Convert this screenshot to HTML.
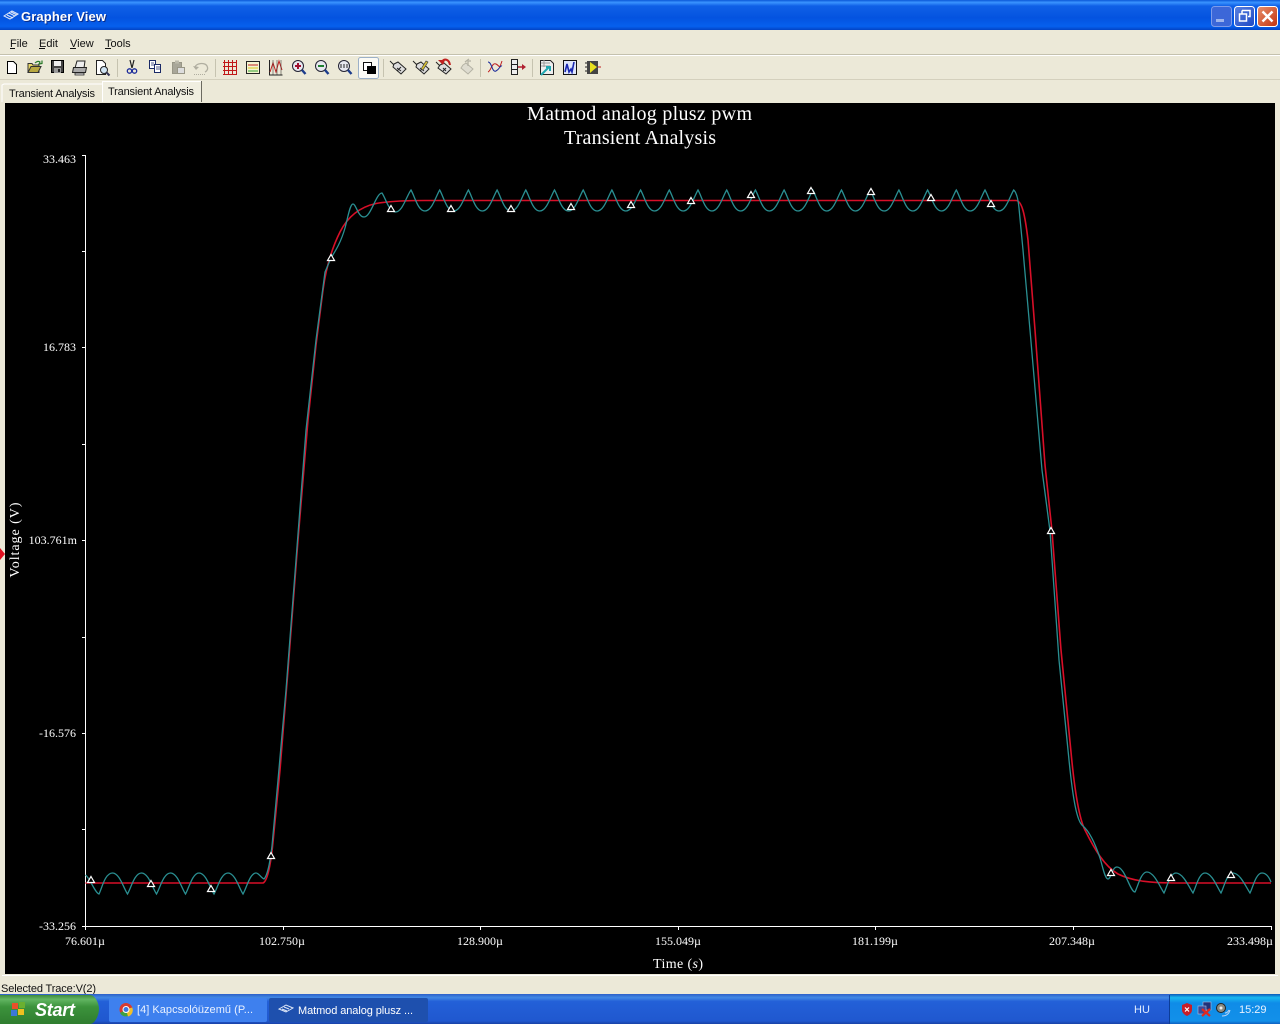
<!DOCTYPE html>
<html>
<head>
<meta charset="utf-8">
<title>Grapher View</title>
<style>
html,body{margin:0;padding:0;width:1280px;height:1024px;overflow:hidden;background:#ece9d8}
svg{position:absolute;left:0;top:0;display:block}
.ui{font-family:"Liberation Sans",sans-serif;font-size:11px;fill:#111}
.s{font-family:"Liberation Serif",serif;fill:#fff}
</style>
</head>
<body>
<svg width="1280" height="1024" viewBox="0 0 1280 1024" xmlns="http://www.w3.org/2000/svg">
<defs>
<linearGradient id="tb" x1="0" y1="0" x2="0" y2="1">
<stop offset="0" stop-color="#0a58d8"/><stop offset=".08" stop-color="#3a93ff"/><stop offset=".2" stop-color="#0f60e6"/><stop offset=".6" stop-color="#0453e0"/><stop offset=".88" stop-color="#0660ee"/><stop offset="1" stop-color="#0343c4"/>
</linearGradient>
<linearGradient id="task" x1="0" y1="0" x2="0" y2="1">
<stop offset="0" stop-color="#2c60c8"/><stop offset=".12" stop-color="#4288e4"/><stop offset=".25" stop-color="#2360d8"/><stop offset=".9" stop-color="#2058cf"/><stop offset="1" stop-color="#1941a5"/>
</linearGradient>
<linearGradient id="tray" x1="0" y1="0" x2="0" y2="1">
<stop offset="0" stop-color="#0c59b9"/><stop offset=".12" stop-color="#19b8f0"/><stop offset=".3" stop-color="#0f8ce8"/><stop offset=".9" stop-color="#1290e9"/><stop offset="1" stop-color="#1060c0"/>
</linearGradient>
<linearGradient id="st" x1="0" y1="0" x2="0" y2="1">
<stop offset="0" stop-color="#3e8a3e"/><stop offset=".15" stop-color="#62b562"/><stop offset=".4" stop-color="#3c933c"/><stop offset="1" stop-color="#2f7d2f"/>
</linearGradient>
<linearGradient id="wb" x1="0" y1="0" x2="1" y2="1"><stop offset="0" stop-color="#5b82e0"/><stop offset="1" stop-color="#1c47c4"/></linearGradient>
<linearGradient id="cb" x1="0" y1="0" x2="1" y2="1"><stop offset="0" stop-color="#e8906c"/><stop offset="1" stop-color="#c2320f"/></linearGradient>
</defs>

<!-- title bar -->
<rect width="1280" height="30" fill="url(#tb)"/>
<g fill="none" stroke="#dfe8f8" stroke-width="1"><path d="M4 16l8-5 6 3-8 5zM7 15l6 3M9 13l6 3M11 12l6 3"/></g>
<text x="22" y="22" font-family="Liberation Sans" font-weight="bold" font-size="13" fill="#0a2c88" textLength="85">Grapher View</text>
<text x="21" y="21" font-family="Liberation Sans" font-weight="bold" font-size="13" fill="#fff" textLength="85">Grapher View</text>
<rect x="1211.500" y="6.500" width="20" height="20" rx="3" fill="#3c67d8" stroke="#7d9bea"/>
<rect x="1216" y="19" width="8" height="3" fill="#9db4ec"/>
<rect x="1234.500" y="6.500" width="20" height="20" rx="3" fill="url(#wb)" stroke="#fff"/>
<path d="M1242 10.500h8v6h-2M1242 10.500v3" fill="none" stroke="#fff" stroke-width="1.500"/>
<rect x="1239.500" y="14" width="7" height="7" fill="none" stroke="#fff" stroke-width="1.500"/>
<rect x="1257.500" y="6.500" width="20" height="20" rx="3" fill="url(#cb)" stroke="#fff"/>
<path d="M1262.500 11.500l10 10M1272.500 11.500l-10 10" stroke="#fff" stroke-width="2.400"/>

<!-- menu -->
<text class="ui" x="10" y="47">File</text><rect x="10" y="48" width="5" height="1" fill="#111"/>
<text class="ui" x="39" y="47">Edit</text><rect x="39" y="48" width="6" height="1" fill="#111"/>
<text class="ui" x="70" y="47">View</text><rect x="70" y="48" width="6" height="1" fill="#111"/>
<text class="ui" x="105" y="47">Tools</text><rect x="105" y="48" width="6" height="1" fill="#111"/>
<rect y="54" width="1280" height="1" fill="#c4c1ae"/><rect y="55" width="1280" height="1" fill="#fff"/>

<!-- toolbar -->
<rect y="79" width="1280" height="1" fill="#d4d0bd"/>
<g fill="#c6c3b0"><rect x="117" y="59" width="1" height="18"/><rect x="215" y="59" width="1" height="18"/><rect x="383" y="59" width="1" height="18"/><rect x="480" y="59" width="1" height="18"/><rect x="532" y="59" width="1" height="18"/></g>
<rect x="358.500" y="57.500" width="20" height="21" rx="2" fill="#fbfaf5" stroke="#9cb0c8"/>

<!-- file icons -->
<path d="M7.500 61.500h6l3 3v9h-9z" fill="#fff" stroke="#000"/>
<path d="M28 72.500v-9h4l1 1.500h6v7.500z" fill="#e8d868" stroke="#333"/><path d="M28 72.500l3-6h10l-3 6z" fill="#b8a840" stroke="#333"/><path d="M35 63c2-2 4-2 5-1l-1 2 3-.5v-3" fill="none" stroke="#2a7a2a" stroke-width="1.200"/>
<rect x="51.500" y="60.500" width="12" height="12" fill="#444" stroke="#000"/><rect x="54" y="61" width="7" height="5" fill="#eee"/><rect x="54" y="68" width="7" height="5" fill="#999"/><rect x="58" y="69" width="2" height="3" fill="#222"/>
<path d="M75 68l2-7h8l-1 7" fill="#eee" stroke="#222"/><path d="M73.500 67.500h13l-1 5h-13z" fill="#aaa" stroke="#222"/><path d="M75 73h9v2h-9z" fill="#ddd" stroke="#222" stroke-width=".8"/>
<path d="M96.500 60.500h6l3 3v11h-9z" fill="#fff" stroke="#222"/><circle cx="104" cy="70" r="3.500" fill="#cfe4f4" stroke="#222"/><path d="M106.500 72.500l3 3" stroke="#335" stroke-width="2"/>
<!-- cut / copy / paste / undo -->
<path d="M130 60l2 8M134 60l-2 8" stroke="#222" stroke-width="1.200"/><circle cx="129.500" cy="71" r="2.200" fill="none" stroke="#1a2a9a" stroke-width="1.300"/><circle cx="134.500" cy="71" r="2.200" fill="none" stroke="#1a2a9a" stroke-width="1.300"/>
<path d="M149.500 60.500h6v8h-6z" fill="#fff" stroke="#1a2a66"/><path d="M154.500 64.500h6v8h-6z" fill="#fff" stroke="#1a2a66"/><path d="M156 67h4M156 69h4M151 63h3M151 65h3" stroke="#1a2a66" stroke-width=".8"/>
<path d="M172.500 62.500h9v11h-9z" fill="#a8a698" stroke="#989686"/><rect x="175" y="60.500" width="4" height="3" fill="#bbb9aa"/><path d="M177.500 67.500h7v6h-7z" fill="#ddd" stroke="#989686"/>
<path d="M195 68c0-5 10-6 12-2 1.500 3 0 5-2 6" fill="none" stroke="#b0aea0" stroke-width="1.300"/><path d="M193 66l3 4 3-3z" fill="#b0aea0"/><path d="M194 74.500h12" stroke="#b0aea0" stroke-dasharray="1 1"/>
<!-- grid -->
<g stroke="#c01818" fill="none"><path d="M224.500 60v15M228.500 60v15M232.500 60v15M236.500 60v15M223 62.500h14M223 66.500h14M223 70.500h14M223 74.500h14"/></g>
<rect x="246.500" y="61.500" width="13" height="12" fill="#f6f4d0" stroke="#222"/><path d="M248 65h10" stroke="#c02020"/><path d="M248 68h10" stroke="#d8c820"/><path d="M248 71h10" stroke="#30a030"/>
<path d="M269.500 60v15h13" fill="none" stroke="#222"/><path d="M270 72l3-9 3 9 3-11 3 9" fill="none" stroke="#c02020"/><path d="M273 60v15M277 60v15M281 60v15" stroke="#222" stroke-width=".5"/>
<!-- zooms -->
<circle cx="298" cy="66" r="5.500" fill="#e8e8f0" stroke="#223"/><path d="M302 70l3.500 4" stroke="#1c3c8c" stroke-width="2.400"/><path d="M295 66h6M298 63v6" stroke="#a01030" stroke-width="2"/>
<circle cx="321" cy="66" r="5.500" fill="#e8e8f0" stroke="#223"/><path d="M325 70l3.500 4" stroke="#1c3c8c" stroke-width="2.400"/><path d="M318 66h6" stroke="#208030" stroke-width="2"/>
<circle cx="344" cy="66" r="5.500" fill="#e8e8f0" stroke="#223"/><path d="M348 70l3.500 4" stroke="#1c3c8c" stroke-width="2.400"/><path d="M341 64v4M344 64v4M347 64v4" stroke="#222"/>
<!-- pressed btn -->
<rect x="363.500" y="62.500" width="8" height="8" fill="#fff" stroke="#111"/><rect x="367" y="66" width="9" height="8" fill="#000"/>
<!-- tags -->
<path d="M390 61l4 4" stroke="#222"/><path d="M394 64l4-2 8 7-5 5-8-7z" fill="#ddd" stroke="#222"/><path d="M397 68l4 3M401 67l-4 4" stroke="#222"/>
<path d="M413 61l4 4" stroke="#222"/><path d="M417 64l4-2 8 7-5 5-8-7z" fill="#ddd" stroke="#222"/><path d="M420 68l4 3M424 67l-4 4" stroke="#222"/><path d="M421 69l5-8 2 1-5 8z" fill="#d8c030" stroke="#444" stroke-width=".7"/>
<path d="M436 62l4 4" stroke="#222"/><path d="M440 65l4-2 7 6-5 5-8-6z" fill="#ddd" stroke="#222"/><path d="M443 68l3 3M446 68l-3 3" stroke="#222"/><path d="M442 62c2-4 7-3 8 3" fill="none" stroke="#c02020" stroke-width="2"/><path d="M438 60l5 5 2-5z" fill="#c02020"/>
<path d="M463 65l3-2 7 6-5 5-7-6z" fill="#dedcd0" stroke="#b4b2a4"/><path d="M468 66v-5h3M465 62l4-3" fill="none" stroke="#b4b2a4" stroke-width="1.300"/>
<!-- traces etc -->
<path d="M488 72c3-1 4-10 8-8s3 6 6-3" fill="none" stroke="#c02020"/><path d="M488 62c4 0 4 11 8 9s4-6 6-5" fill="none" stroke="#1a2a9a"/>
<g fill="#eee" stroke="#222"><rect x="511.500" y="59.500" width="6" height="5"/><rect x="511.500" y="64.500" width="6" height="5"/><rect x="511.500" y="69.500" width="6" height="5"/></g><path d="M518 67h5" stroke="#b02030" stroke-width="1.500"/><path d="M522 64l4 3-4 3z" fill="#b02030"/>
<path d="M540.500 60.500h10l3 3v11h-13z" fill="#eee" stroke="#222"/><path d="M541 63h9M541 66h9M544 60v7" stroke="#999"/><path d="M541 75l8-8M546 67h4v4" fill="none" stroke="#20a8b0" stroke-width="2"/>
<rect x="563.500" y="60.500" width="13" height="14" fill="#dfe6fa" stroke="#111"/><path d="M565 72l2-8 2 8 2-3 1 3 2-10" fill="none" stroke="#1a28b0" stroke-width="1.600"/>
<rect x="587" y="61" width="11" height="13" fill="#444"/><path d="M590 62l7 5-7 6z" fill="#e8e020"/><path d="M598 67h3" stroke="#c02020"/><path d="M585 63h2M585 67h2M585 71h2" stroke="#222"/>

<!-- tabs -->
<rect y="80" width="1280" height="22" fill="#ece9d8"/>
<path d="M2 102V85l2-1h98" fill="none" stroke="#fff"/>
<path d="M102 102V81h99v21" fill="#f0eee0"/>
<path d="M102.500 102V81.500h99" fill="none" stroke="#fff"/><path d="M201.500 81v21" stroke="#6b6a60"/>
<text class="ui" x="9" y="97" textLength="86">Transient Analysis</text>
<text class="ui" x="108" y="95" textLength="86">Transient Analysis</text>

<!-- plot -->
<rect x="5" y="103" width="1270" height="871" fill="#000"/>
<path d="M0 548l5 6-5 6z" fill="#e01020"/>
<rect x="2" y="975" width="1276" height="1" fill="#fff"/>
<text class="s" x="527" y="120" font-size="20" textLength="225">Matmod analog plusz pwm</text>
<text class="s" x="564" y="144" font-size="20" textLength="152">Transient Analysis</text>

<g stroke="#fff" stroke-width="1" fill="none">
<path d="M85.500 155V926.500H1272"/>
<path d="M82 155.500h4M82 251.500h4M82 347.500h4M82 444.500h4M82 540.500h4M82 637.500h4M82 733.500h4M82 829.500h4M82 926.500h4"/>
<path d="M85.500 926v4M283.500 926v4M480.500 926v4M678.500 926v4M875.500 926v4M1073.500 926v4M1271.500 926v4"/>
</g>

<g class="s" font-size="12" text-anchor="end">
<text x="76" y="163">33.463</text>
<text x="76" y="351">16.783</text>
<text x="77" y="544">103.761m</text>
<text x="76" y="737">-16.576</text>
<text x="76" y="930">-33.256</text>
</g>
<g class="s" font-size="12" text-anchor="middle">
<text x="85" y="945">76.601µ</text>
<text x="282" y="945">102.750µ</text>
<text x="480" y="945">128.900µ</text>
<text x="678" y="945">155.049µ</text>
<text x="875" y="945">181.199µ</text>
<text x="1072" y="945">207.348µ</text>
<text x="1250" y="945">233.498µ</text>
</g>
<text class="s" x="678" y="968" font-size="14" text-anchor="middle" textLength="50">Time (<tspan font-style="italic">s</tspan>)</text>
<text class="s" font-size="14" text-anchor="middle" transform="translate(19 540) rotate(-90)" textLength="75">Voltage (V)</text>

<!-- red trace (under teal on slopes) -->
<path fill="none" stroke="#d80f28" stroke-width="1.600" d="M85.500 883H263
C268 881 271 862 273 842 L280 770 L288 670 L298 540 L308 420 L316 345 L323 290
C326 268 332 248 340 232 C348 216 360 207 376 203.500 C390 201 405 200.500 425 200.500 H1016
C1022 200.500 1025 215 1028 240 L1035 330 L1045 465 L1052 531 L1061 650 L1071 752
C1075 795 1080 822 1086 832 C1094 848 1104 866 1118 874 C1132 881 1150 883 1175 883 H1271"/>

<!-- teal trace -->
<path fill="none" stroke="#2a8f92" stroke-width="1.300" d="M85.500 875C90 878 95 893 99 894
C102 888 105 873 112.500 873
c7 0 11 15 15 21 c3.500 -6 7 -21 14 -21
c7 0 11 15 15 21 c3.500 -6 7 -21 14 -21
c7 0 11 15 15 21 c3.500 -6 7 -21 13.500 -21
c7 0 11 15 15 21 c3.500 -6 7 -21 14 -21
c7 0 11 15 15 21 c3.500 -6 7 -21 13 -21
C259 873 261 878 264 879
C268 875 271 856 272 846
L278 780 L286 690 L296 560 L306 430 L316 340 L325 272 L331 258
C336 250 341 242 345 228 C348 217 350 204 353 204 C356 204 358 217 364 217 C371 217 376 193 382 193
c4 6 7 19 13.500 19
c7 0 11 -16 15.500 -22
c4 7 7 21 14 21 c7 0 11 -15 14.700 -21
c4 7 7 21 14 21 c7 0 11 -15 14.700 -21
c4 7 7 21 14 21 c7 0 11 -15 14.700 -21
c4 7 7 21 14 21 c7 0 11 -15 14.700 -21
c4 7 7 21 14 21 c7 0 11 -15 14.700 -21
c4 7 7 21 14 21 c7 0 11 -15 14.700 -21
c4 7 7 21 14 21 c7 0 11 -15 14.700 -21
c4 7 7 21 14 21 c7 0 11 -15 14.700 -21
c4 7 7 21 14 21 c7 0 11 -15 14.700 -21
c4 7 7 21 14 21 c7 0 11 -15 14.700 -21
c4 7 7 21 14 21 c7 0 11 -15 14.700 -21
c4 7 7 21 14 21 c7 0 11 -15 14.700 -21
c4 7 7 21 14 21 c7 0 11 -15 14.700 -21
c4 7 7 21 14 21 c7 0 11 -15 14.700 -21
c4 7 7 21 14 21 c7 0 11 -15 14.700 -21
c4 7 7 21 14 21 c7 0 11 -15 14.700 -21
c4 7 7 21 14 21 c7 0 11 -15 14.700 -21
c4 7 7 21 14 21 c7 0 11 -15 14.700 -21
c4 7 7 21 14 21 c7 0 11 -15 14.700 -21
c4 7 7 21 14 21 c7 0 11 -15 14.700 -21
c4 7 7 21 14 21 c7 0 11 -15 14.700 -21
C1016 192 1018 198 1019 208
L1023 250 L1030 330 L1042 470 L1050 531 L1059 660 L1069 760
C1073 800 1077 822 1083 826 C1090 832 1096 846 1100 858 C1103 868 1105 879 1108 879
C1111 879 1112 867 1117 867 C1125 867 1130 892 1135 892 C1138 886 1141 872 1147 872
C1154 872 1160 887 1164 893 C1167 887 1170 873 1176 873
C1183 873 1189 887 1193 893 C1196 887 1199 873 1205 873
C1212 873 1217 887 1221 893 C1224 887 1227 873 1233 873
C1240 873 1246 887 1250 893 C1253 887 1256 873 1262 873 C1266 873 1269 877 1271 882"/>

<!-- markers -->
<g fill="#000" stroke="#fff" stroke-width="1.200">
<path d="M91 876.500l3.500 6h-7z"/><path d="M151 880.500l3.500 6h-7z"/><path d="M211 885.500l3.500 6h-7z"/><path d="M271 852.500l3.500 6h-7z"/>
<path d="M331 254.500l3.500 6h-7z"/><path d="M391 205.500l3.500 6h-7z"/><path d="M451 205.500l3.500 6h-7z"/><path d="M511 205.500l3.500 6h-7z"/>
<path d="M571 203.500l3.500 6h-7z"/><path d="M631 201.500l3.500 6h-7z"/><path d="M691 197.500l3.500 6h-7z"/><path d="M751 191.500l3.500 6h-7z"/>
<path d="M811 187.500l3.500 6h-7z"/><path d="M871 188.500l3.500 6h-7z"/><path d="M931 194.500l3.500 6h-7z"/><path d="M991 200.500l3.500 6h-7z"/>
<path d="M1051 527.500l3.500 6h-7z"/><path d="M1111 869.500l3.500 6h-7z"/><path d="M1171 874.500l3.500 6h-7z"/><path d="M1231 871.500l3.500 6h-7z"/>
</g>

<!-- status bar -->
<rect y="976" width="1280" height="18" fill="#ece9d8"/>
<text class="ui" x="1" y="992" textLength="95">Selected Trace:V(2)</text>

<!-- taskbar -->
<rect y="994" width="1280" height="30" fill="url(#task)"/>
<path d="M0 995h90c5 0 9 8 9 14s-4 15-9 15H0z" fill="url(#st)"/>
<g><rect x="12" y="1003" width="6" height="6" fill="#e8502a"/><rect x="19" y="1002" width="6" height="6" fill="#6ab030"/><rect x="11" y="1010" width="6" height="6" fill="#3c78d8"/><rect x="18" y="1009" width="6" height="6" fill="#f0c020"/></g>
<text x="35" y="1016" font-family="Liberation Sans" font-weight="bold" font-style="italic" font-size="18" fill="#fff" textLength="40">Start</text>

<rect x="109" y="998" width="158" height="24" rx="2" fill="#3e80ee"/>
<rect x="269" y="998" width="159" height="24" rx="2" fill="#1e50ae"/>
<circle cx="126" cy="1009.500" r="6.500" fill="#d83a30"/><path d="M126 1009.500L120 1013a6.500 6.500 0 0 0 8 3z" fill="#40a040"/><path d="M126 1009.500l6.200-2a6.500 6.500 0 0 1-4.200 9z" fill="#f0c028"/><circle cx="126" cy="1009.500" r="3" fill="#3a78e0" stroke="#fff"/>
<text class="ui" x="137" y="1013" style="fill:#e8f0ff" textLength="116">[4] Kapcsolóüzemű (P...</text>
<path d="M279 1009l7-4 7 3-7 4zM282 1009l5 2M284 1007l5 2" fill="none" stroke="#dfe8f8"/>
<text class="ui" x="298" y="1014" style="fill:#fff" textLength="115">Matmod analog plusz ...</text>

<text class="ui" x="1134" y="1013" style="fill:#e0ecff">HU</text>
<rect x="1170" y="994" width="110" height="30" fill="url(#tray)"/>
<rect x="1169" y="995" width="1" height="29" fill="#0b3d98"/>
<path d="M1187 1003l5 2v5c0 3-3 5-5 6-2-1-5-3-5-6v-5z" fill="#c81e28"/><path d="M1185 1007.500l4 4M1189 1007.500l-4 4" stroke="#fff" stroke-width="1.200"/>
<rect x="1203" y="1002" width="8" height="8" fill="#20307a" stroke="#b0c0e0" stroke-width=".6"/><rect x="1198" y="1006" width="8" height="8" fill="#3a4a9a" stroke="#b0c0e0" stroke-width=".6"/>
<path d="M1202 1009l8 7M1210 1009l-8 7" stroke="#e02820" stroke-width="2.200"/>
<circle cx="1221" cy="1008" r="4.500" fill="#8a8a80" stroke="#222"/><circle cx="1221" cy="1008" r="1.500" fill="#eee"/>
<path d="M1225 1013c2 0 3-1 4-3M1222 1016c4 0 7-2 8-6" fill="none" stroke="#b8d4f4"/>
<text class="ui" x="1239" y="1013" style="fill:#e8f2ff">15:29</text>
</svg>
</body>
</html>
